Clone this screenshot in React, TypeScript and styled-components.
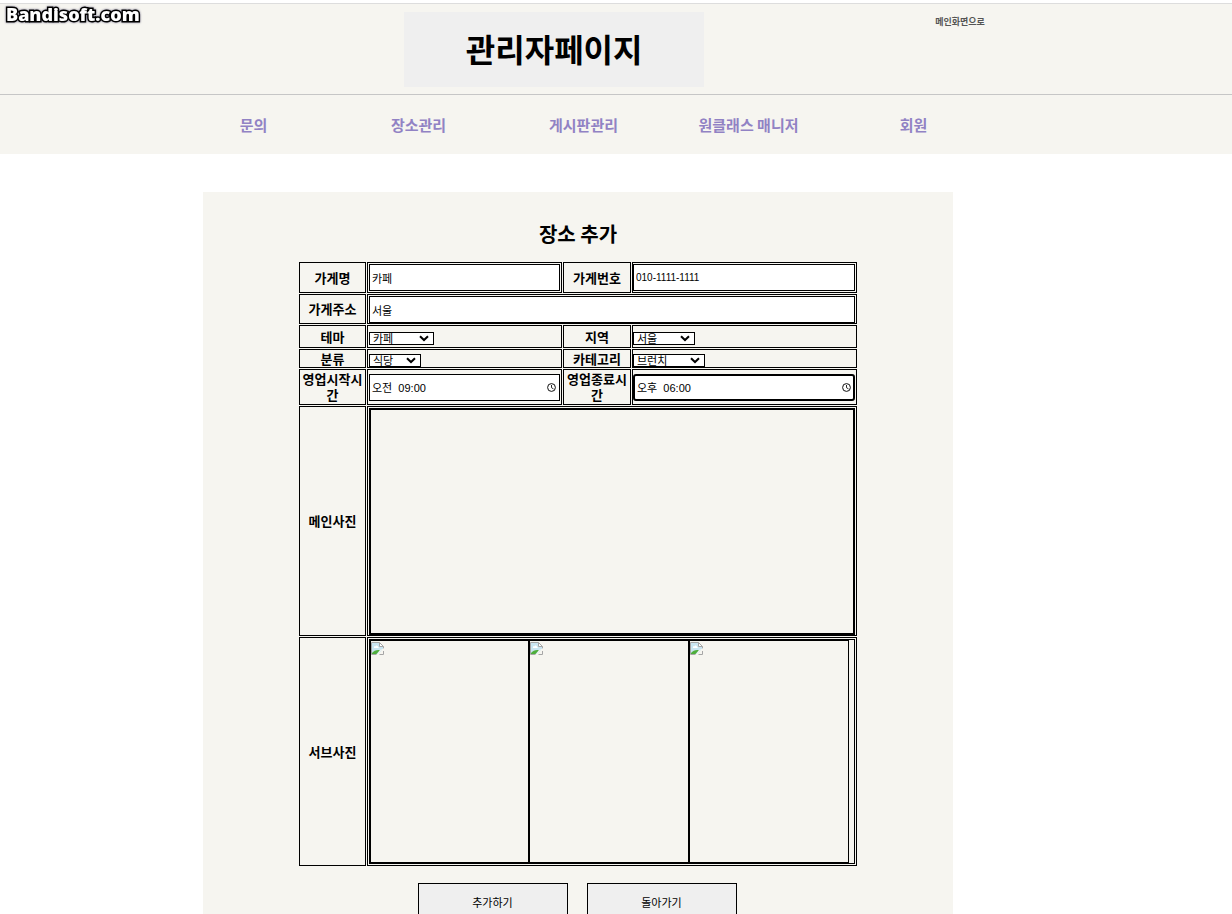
import React from "react";
import styled, { createGlobalStyle } from "styled-components";

const GlobalStyle = createGlobalStyle`
  * { box-sizing: border-box; }
  body {
    margin: 0;
    background: #fff;
    color: #000;
    font-family: "Noto Sans CJK KR", sans-serif;
    overflow-x: hidden;
  }
`;

const Header = styled.header`
  position: relative;
  margin-top: 3px;
  border-top: 1px solid #ddd;
  background: #f6f5f0;
`;

const Watermark = styled.span`
  position: absolute;
  left: 6px;
  top: 0;
  font: 800 18px/21px "Open Sans", sans-serif;
  color: #fff;
  -webkit-text-stroke: 3px #000;
  paint-order: stroke fill;
  filter: drop-shadow(0 0 1px #77738c);
`;

const Banner = styled.div`
  display: flex;
  justify-content: center;
  align-items: flex-start;
  height: 91px;
  padding: 8px 0 0 157px;
  gap: 231px;
  border-bottom: 1px solid #c6c6c6;
`;

const TitleButton = styled.button`
  width: 300px;
  height: 75px;
  padding: 0 0 4px;
  border: 0;
  background: #efefef;
  color: #000;
  font: 700 32px/48px "Noto Sans CJK KR", sans-serif;
`;

const HomeLink = styled.a`
  margin-top: 2px;
  color: #555;
  font-size: 9px;
  font-weight: 700;
  line-height: 15px;
  text-decoration: none;
`;

const Nav = styled.nav`
  display: flex;
  justify-content: center;
  height: 59px;
  padding-right: 65px;
`;

const NavLink = styled.a`
  width: 165px;
  color: #9182c4;
  font-size: 15px;
  font-weight: 700;
  line-height: 60px;
  text-align: center;
  text-decoration: none;
`;

const Main = styled.main`
  display: flex;
  justify-content: center;
  padding: 38px 76px 0 0;
`;

const Panel = styled.form`
  display: flex;
  flex-direction: column;
  align-items: center;
  width: 750px;
  min-height: 760px;
  padding-top: 28px;
  background: #f6f5f0;
`;

const Heading = styled.h2`
  margin: 0 0 13px;
  font-size: 20px;
  font-weight: 700;
  line-height: 28px;
`;

const Table = styled.table`
  width: 560px;
  table-layout: fixed;
  border-collapse: separate;
  border-spacing: 1px;
`;

const Row = styled.tr<{ $height: number }>`
  height: ${(p) => p.$height}px;
`;

const Th = styled.th`
  padding: 0;
  border: 1px solid #000;
  font-size: 13px;
  font-weight: 700;
  line-height: 16px;
`;

const Td = styled.td<{ $pad?: string; $align?: string }>`
  padding: ${(p) => p.$pad ?? "1px"};
  border: 1px solid #000;
  vertical-align: ${(p) => p.$align ?? "middle"};
`;

const Input = styled.input<{ $active?: boolean }>`
  display: block;
  width: 100%;
  height: 27px;
  padding: 0 2px;
  border: ${(p) => (p.$active ? 2 : 1)}px solid #000;
  border-radius: ${(p) => (p.$active ? 3 : 0)}px;
  outline: 0;
  background: #fff;
  color: #000;
  font: 11px "Liberation Sans", "Noto Sans CJK KR", sans-serif;
`;

const PhoneInput = styled(Input)`
  font-size: 10px;
`;

const TimeField = styled.div`
  position: relative;

  svg {
    position: absolute;
    right: 4px;
    top: 9px;
  }
`;

const SelectField = styled.div<{ $width: number }>`
  position: relative;
  width: ${(p) => p.$width}px;
  height: 13px;

  svg {
    position: absolute;
    right: 5px;
    top: 3px;
    pointer-events: none;
  }
`;

const Select = styled.select`
  display: block;
  width: 100%;
  height: 13px;
  padding: 0 3px;
  appearance: none;
  border: 1px solid #000;
  border-radius: 0;
  background: #fff;
  color: #000;
  font: 11px/11px "Noto Sans CJK KR", sans-serif;
`;

const MainPhoto = styled.div`
  height: 227px;
  border: 2px solid #000;
`;

const SubPhotos = styled.div`
  display: grid;
  grid-template-columns: 159px 160px 160px;
  height: 225px;
  border: 1px solid #000;
`;

const SubPhoto = styled.div`
  padding: 1px 0;
  border: 1px solid #000;

  svg { display: block; }
`;

const Actions = styled.div`
  display: flex;
  gap: 19px;
  margin-top: 16px;
  padding-right: 2px;
`;

const ActionButton = styled.button`
  width: 150px;
  height: 38px;
  padding: 0;
  border: 1px solid #000;
  background: #efefef;
  color: #000;
  font: 11px "Noto Sans CJK KR", sans-serif;
`;

const Clock = () => (
  <svg width="9" height="9" viewBox="0 0 9 9" fill="none" stroke="#111" aria-hidden="true">
    <circle cx="4.5" cy="4.5" r="3.9" />
    <path d="M4.5 2v2.7l2 1.2" strokeWidth="0.9" />
  </svg>
);

const Chevron = () => (
  <svg width="10" height="7" viewBox="0 0 10 7" fill="none" stroke="#000" strokeWidth="2" aria-hidden="true">
    <path d="M1 1.2 5 5 9 1.2" />
  </svg>
);

const BrokenImage = () => (
  <svg width="13" height="13" viewBox="0 0 13 13" role="img" aria-label="이미지 없음">
    <path d="M1 1h8l3 3v3l-5 5H1z" fill="#c9e5f1" />
    <path d="M3 6c-.6-1.4.6-2 1.3-1.6C4.800 3 7 3.400 7 5c1 0 1 1 .5 1z" fill="#fff" />
    <path d="M1 12v-1C3 8.500 5.500 7.500 9 8l-3.500 4z" fill="#4fae3b" />
    <path d="M8.500 1v3.500H12z" fill="#fff" />
    <path d="M12.500 6.500v-2l-4-4H.5v12h5M8.500.5v4h4M8.500 12.500h4V9" fill="none" stroke="#a6a6a6" />
    <path d="M13 7 9 8.500 6.500 13" fill="none" stroke="#f6f5f0" />
  </svg>
);

const navItems = ["문의", "장소관리", "게시판관리", "원클래스 매니저", "회원"];

type DropdownProps = { id: string; width: number; value: string };

const Dropdown = ({ id, width, value }: DropdownProps) => (
  <SelectField $width={width}>
    <Select id={id} defaultValue={value}>
      <option>{value}</option>
    </Select>
    <Chevron />
  </SelectField>
);

export default function App() {
  return (
    <>
      <GlobalStyle />
      <Header>
        <Watermark>Bandisoft.com</Watermark>
        <Banner>
          <TitleButton type="button">관리자페이지</TitleButton>
          <HomeLink href="#">메인화면으로</HomeLink>
        </Banner>
        <Nav>
          {navItems.map((item) => (
            <NavLink key={item} href="#">{item}</NavLink>
          ))}
        </Nav>
      </Header>
      <Main>
        <Panel>
          <Heading>장소 추가</Heading>
          <Table>
            <colgroup>
              <col style={{ width: 67 }} />
              <col style={{ width: 195 }} />
              <col style={{ width: 68 }} />
              <col style={{ width: 225 }} />
            </colgroup>
            <tbody>
              <Row $height={31}>
                <Th><label htmlFor="name">가게명</label></Th>
                <Td><Input id="name" defaultValue="카페" /></Td>
                <Th><label htmlFor="phone">가게번호</label></Th>
                <Td $pad="1px 1px 1px 0"><PhoneInput id="phone" defaultValue="010-1111-1111" /></Td>
              </Row>
              <Row $height={30}>
                <Th><label htmlFor="address">가게주소</label></Th>
                <Td colSpan={3} $pad="1px 1px 0"><Input id="address" defaultValue="서울" /></Td>
              </Row>
              <Row $height={23}>
                <Th><label htmlFor="theme">테마</label></Th>
                <Td $pad="0 1px 2px" $align="bottom"><Dropdown id="theme" width={65} value="카페" /></Td>
                <Th><label htmlFor="region">지역</label></Th>
                <Td $pad="0 1px 2px 0" $align="bottom"><Dropdown id="region" width={62} value="서울" /></Td>
              </Row>
              <Row $height={19}>
                <Th><label htmlFor="kind">분류</label></Th>
                <Td $pad="0 1px" $align="bottom"><Dropdown id="kind" width={52} value="식당" /></Td>
                <Th><label htmlFor="category">카테고리</label></Th>
                <Td $pad="0" $align="bottom"><Dropdown id="category" width={72} value="브런치" /></Td>
              </Row>
              <Row $height={36}>
                <Th><label htmlFor="open">영업시작시간</label></Th>
                <Td><TimeField><Input id="open" defaultValue="오전  09:00" /><Clock /></TimeField></Td>
                <Th><label htmlFor="close">영업종료시간</label></Th>
                <Td $pad="1px 1px 1px 0"><TimeField><Input id="close" $active defaultValue="오후  06:00" /><Clock /></TimeField></Td>
              </Row>
              <Row $height={230}>
                <Th>메인사진</Th>
                <Td colSpan={3} $pad="1px 1px 0"><MainPhoto /></Td>
              </Row>
              <Row $height={229}>
                <Th>서브사진</Th>
                <Td colSpan={3}>
                  <SubPhotos>
                    <SubPhoto><BrokenImage /></SubPhoto>
                    <SubPhoto><BrokenImage /></SubPhoto>
                    <SubPhoto><BrokenImage /></SubPhoto>
                  </SubPhotos>
                </Td>
              </Row>
            </tbody>
          </Table>
          <Actions>
            <ActionButton type="button">추가하기</ActionButton>
            <ActionButton type="button">돌아가기</ActionButton>
          </Actions>
        </Panel>
      </Main>
    </>
  );
}
